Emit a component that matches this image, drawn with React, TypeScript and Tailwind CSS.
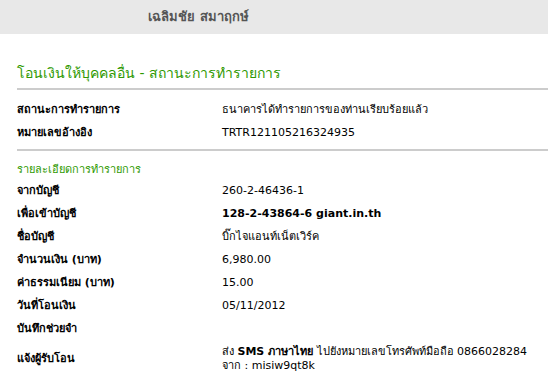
const rows1 = [
  { label: "สถานะการทำรายการ", value: "ธนาคารได้ทำรายการของท่านเรียบร้อยแล้ว" },
  { label: "หมายเลขอ้างอิง", value: "TRTR121105216324935" },
];

const rows2 = [
  { label: "จากบัญชี", value: "260-2-46436-1" },
  { label: "เพื่อเข้าบัญชี", value: "128-2-43864-6 giant.in.th", bold: true },
  { label: "ชื่อบัญชี", value: "บิ๊กไจแอนท์เน็ตเวิร์ค" },
  { label: "จำนวนเงิน (บาท)", value: "6,980.00" },
  { label: "ค่าธรรมเนียม (บาท)", value: "15.00" },
  { label: "วันที่โอนเงิน", value: "05/11/2012" },
  { label: "บันทึกช่วยจำ", value: "" },
];

function Row({ label, value, bold }: { label: string; value: string; bold?: boolean }) {
  return (
    <div className="flex h-[23px] items-center">
      <div className="w-[205px] font-bold">{label}</div>
      <div className={bold ? "font-bold" : ""}>{value}</div>
    </div>
  );
}

export default function App() {
  return (
    <div
      className="w-[548px] h-[380px] overflow-hidden bg-white text-[11px] text-black"
      style={{ fontFamily: '"DejaVu Sans", Tahoma, Verdana, sans-serif' }}
    >
      <div className="h-[34px] bg-[#e8e8e8] flex items-center pl-[148px] text-[13px] font-bold text-[#555]">
        เฉลิมชัย สมาฤกษ์
      </div>
      <div className="pl-[17px]">
        <h1 className="mt-[29px] h-[20px] flex items-center text-[14px] text-[#2e9900]">
          โอนเงินให้บุคคลอื่น - สถานะการทำรายการ
        </h1>
        <div className="mt-[5px] h-[2px] bg-[#cccccc]" />
        <div className="mt-[9px]">
          {rows1.map((r) => (
            <Row key={r.label} {...r} />
          ))}
        </div>
        <div className="mt-[4px] h-[2px] bg-[#cccccc]" />
        <div className="mt-[11px] h-[16px] flex items-center text-[#2e9900]">รายละเอียดการทำรายการ</div>
        <div className="mt-[2px]">
          {rows2.map((r) => (
            <Row key={r.label} {...r} />
          ))}
        </div>
        <div className="mt-[4px] flex items-center">
          <div className="w-[205px] font-bold">แจ้งผู้รับโอน</div>
          <div className="leading-[14px]">
            <div>
              ส่ง <span className="font-bold">SMS ภาษาไทย</span> ไปยังหมายเลขโทรศัพท์มือถือ 0866028284
            </div>
            <div>จาก : misiw9qt8k</div>
          </div>
        </div>
      </div>
    </div>
  );
}
